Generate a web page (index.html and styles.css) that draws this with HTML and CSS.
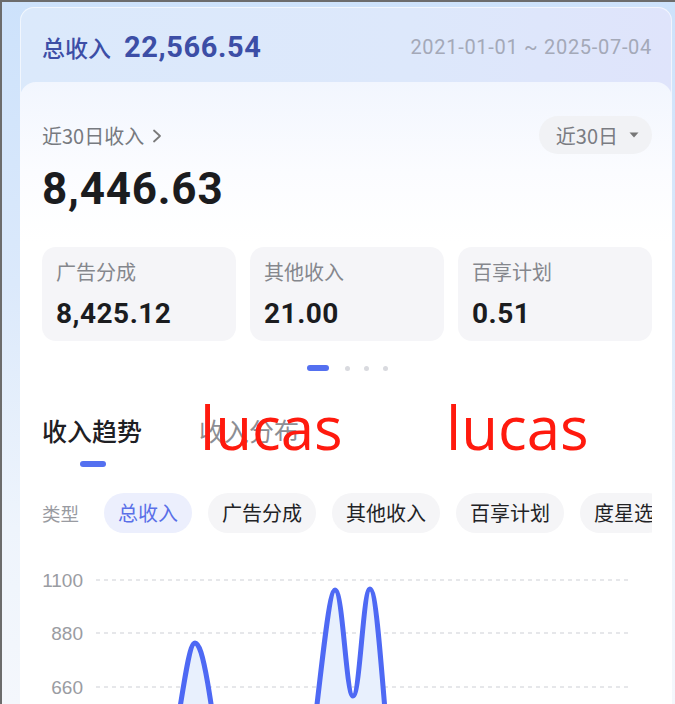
FILE: index.html
```html
<!DOCTYPE html>
<html lang="zh">
<head>
<meta charset="utf-8">
<title>收入</title>
<link rel="stylesheet" href="styles.css">
</head>
<body>
<div class="frame">
  <div class="outer">
    <div class="head">
      <div class="head-left">
        <span class="head-label">总收入</span>
        <span class="head-num">22,566.54</span>
      </div>
      <span class="head-date">2021-01-01 ~ 2025-07-04</span>
    </div>
    <div class="inner">
      <div class="row-top">
        <span class="recent">近30日收入 <svg class="chev" width="10" height="16" viewBox="0 0 10 16"><path d="M2 2.5 L8 8 L2 13.5" fill="none" stroke="#7a7a7a" stroke-width="1.8" stroke-linecap="round" stroke-linejoin="round"/></svg></span>
        <span class="pill">近30日 <svg class="tri" width="10" height="6" viewBox="0 0 10 6"><path d="M0.5 0.5 L9.5 0.5 L5 5.5 Z" fill="#777"/></svg></span>
      </div>
      <div class="big">8,446.63</div>
      <div class="cards">
        <div class="card"><div class="card-label">广告分成</div><div class="card-val">8,425.12</div></div>
        <div class="card"><div class="card-label">其他收入</div><div class="card-val">21.00</div></div>
        <div class="card"><div class="card-label">百享计划</div><div class="card-val">0.51</div></div>
      </div>
      <div class="dots"><span class="dot active"></span><span class="dot"></span><span class="dot"></span><span class="dot"></span></div>
      <div class="tabs">
        <span class="tab on">收入趋势</span>
        <span class="tab">收入分布</span>
        <span class="wm wm1">lucas</span>
        <span class="wm wm2">lucas</span>
      </div>
      <div class="tab-bar"></div>
      <div class="types">
        <span class="type-label">类型</span>
        <span class="chip sel">总收入</span>
        <span class="chip">广告分成</span>
        <span class="chip">其他收入</span>
        <span class="chip">百享计划</span>
        <span class="chip">度星选</span>
      </div>
      <svg class="chart" width="610" height="150" viewBox="0 0 610 150">
        <g class="grid">
          <line x1="54" y1="20" x2="586" y2="20"/>
          <line x1="54" y1="73" x2="586" y2="73"/>
          <line x1="54" y1="127" x2="586" y2="127"/>
        </g>
        <g class="ylab">
          <text x="41" y="27">1100</text>
          <text x="41" y="80">880</text>
          <text x="41" y="134">660</text>
        </g>
        <path class="area" d="M120 260 C140 140, 146 83, 153 83 C161 83, 168 130, 185 260 Z"/>
        <path class="area" d="M262 260 C280 100, 287 30, 293 30 C301 30, 304 136, 311 136 C318 136, 321 29, 328 29 C335 29, 340 120, 352 260 Z"/>
        <path class="line" d="M120 260 C140 140, 146 83, 153 83 C161 83, 168 130, 185 260"/>
        <path class="line" d="M262 260 C280 100, 287 30, 293 30 C301 30, 304 136, 311 136 C318 136, 321 29, 328 29 C335 29, 340 120, 352 260"/>
      </svg>
    </div>
  </div>
</div>
</body>
</html>
```
FILE: styles.css
```css
* { box-sizing: border-box; }
html, body { margin: 0; padding: 0; }
body {
  width: 675px;
  height: 704px;
  overflow: hidden;
  font-family: "Noto Sans CJK SC", "Noto Sans", sans-serif;
  background: #ffffff;
}
.frame {
  width: 675px;
  height: 704px;
  overflow: hidden;
  border-top: 2px solid #6c6c6c;
  border-left: 2px solid #6c6c6c;
  padding: 5px 0 0 18px;
  background: linear-gradient(180deg, #cde2fb 0%, #dbe9fb 40%, #eef4fc 75%, #f4f7fc 100%);
}
.outer {
  width: 652px;
  height: 760px;
  border-radius: 14px 14px 0 0;
  background: linear-gradient(90deg, #dbe9fb 0%, #dde8fb 60%, #dfe4fb 100%);
  box-shadow: inset 0 0 0 1px rgba(255,255,255,0.6);
}
.head {
  height: 75px;
  padding: 4px 20px 0 22px;
  display: flex;
  align-items: center;
  justify-content: space-between;
}
.head-left { display: flex; align-items: center; gap: 13px; }
.head-label {
  font-size: 23px;
  font-weight: 500;
  color: #3c4ea6;
  line-height: 30px;
}
.head-num {
  font-family: Roboto, "Noto Sans", sans-serif;
  font-weight: 700;
  font-size: 29px;
  letter-spacing: 0.6px;
  color: #3c4ea6;
  line-height: 34px;
}
.head-date {
  font-family: Roboto, "Noto Sans", sans-serif;
  font-size: 20px;
  letter-spacing: 0.7px;
  color: #a4a9b8;
}
.inner {
  position: relative;
  height: 700px;
  border-radius: 16px 16px 0 0;
  background: linear-gradient(180deg, #f2f6fe 0px, #fbfcff 90px, #ffffff 160px);
  padding: 34px 20px 0 22px;
}
.row-top {
  height: 38px;
  display: flex;
  align-items: center;
  justify-content: space-between;
}
.recent {
  font-size: 20px;
  color: #777a80;
  display: flex;
  align-items: center;
  gap: 8px;
}
.chev { margin-top: 1px; }
.pill {
  height: 38px;
  border-radius: 19px;
  background: #f1f2f5;
  padding: 0 13px 0 17px;
  display: flex;
  align-items: center;
  gap: 11px;
  font-size: 20px;
  color: #7a7c82;
}
.big {
  margin-top: 9px;
  font-family: Roboto, "Noto Sans", sans-serif;
  font-weight: 700;
  font-size: 44px;
  line-height: 52px;
  letter-spacing: 0.8px;
  color: #1b1c1f;
}
.cards {
  margin-top: 32px;
  display: flex;
  gap: 14px;
}
.card {
  flex: 1;
  height: 94px;
  border-radius: 14px;
  background: #f5f5f8;
  padding: 12px 14px 0 14px;
}
.card-label {
  font-size: 20px;
  line-height: 26px;
  color: #85878d;
}
.card-val {
  margin-top: 12px;
  font-family: Roboto, "Noto Sans", sans-serif;
  font-weight: 700;
  font-size: 28px;
  line-height: 34px;
  letter-spacing: 0.5px;
  color: #1b1c1f;
}
.dots {
  margin-top: 24px;
  height: 6px;
  display: flex;
  justify-content: center;
  align-items: center;
  gap: 14px;
}
.dot {
  width: 5px;
  height: 5px;
  border-radius: 50%;
  background: #d9dadf;
}
.dot.active {
  width: 22px;
  height: 6px;
  border-radius: 3px;
  background: #5470f0;
  margin-right: 2px;
}
.tabs {
  position: relative;
  margin-top: 43px;
  height: 32px;
  display: flex;
  align-items: center;
  gap: 57px;
}
.tab {
  font-size: 25px;
  line-height: 32px;
  color: #8c8e94;
}
.tab.on { color: #1f2024; font-weight: 500; }
.wm {
  position: absolute;
  top: -17px;
  font-family: "Open Sans", "Noto Sans", sans-serif;
  font-size: 60px;
  line-height: 60px;
  color: #ff1a0e;
  white-space: nowrap;
}
.wm1 { left: 158px; }
.wm2 { left: 404px; }
.tab-bar {
  margin-top: 15px;
  margin-left: 38px;
  width: 26px;
  height: 6px;
  border-radius: 3px;
  background: #5470f0;
}
.types {
  margin-top: 26px;
  height: 40px;
  display: flex;
  align-items: center;
  gap: 16px;
  overflow: hidden;
  white-space: nowrap;
}
.type-label {
  font-size: 18.5px;
  color: #999ba1;
  margin-right: 9px;
  flex: none;
}
.chip {
  flex: none;
  height: 40px;
  line-height: 40px;
  padding: 0 14px;
  border-radius: 20px;
  background: #f5f5f7;
  font-size: 20px;
  color: #222326;
}
.chip.sel {
  background: #eceffd;
  color: #5a6fe8;
}
.chart {
  display: block;
  margin-top: 27px;
}
.grid line {
  stroke: #dedfe3;
  stroke-width: 1.5;
  stroke-dasharray: 4 4;
}
.ylab text {
  font-family: "Liberation Sans", Arial, sans-serif;
  font-size: 19px;
  fill: #9a9ca2;
  text-anchor: end;
}
.area { fill: #e8f0fd; }
.line {
  fill: none;
  stroke: #4e69f4;
  stroke-width: 5;
  stroke-linecap: round;
  stroke-linejoin: round;
}
```
